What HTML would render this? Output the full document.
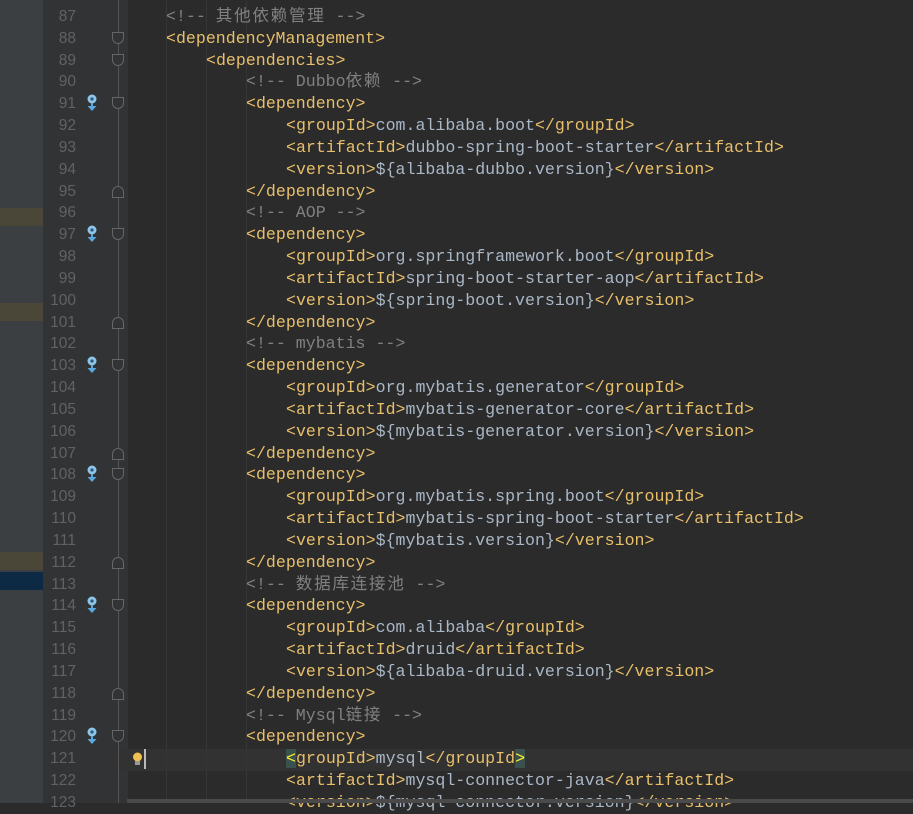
<!DOCTYPE html>
<html><head><meta charset="utf-8"><style>
body{margin:0;width:913px;height:803px;overflow:hidden;background:#2b2b2b;position:relative;font-family:"Liberation Mono","Noto Sans CJK SC",monospace;font-size:16.6px}
.lp{position:absolute;left:0;top:0;width:43px;height:803px;background:#3c3f41}
.gut{position:absolute;left:43px;top:0;width:85px;height:803px;background:#313335}
.fold{position:absolute;left:118px;top:0;width:1px;height:803px;background:#555}
.ln{position:absolute;left:43px;width:33px;text-align:right;color:#606366;font-family:"Liberation Sans",sans-serif;font-size:15.5px;line-height:21.83px}
.c{position:absolute;left:126px;white-space:pre;color:#a9b7c6;line-height:21.83px}
.t{color:#e8bf6a}.m{color:#808080}.z{letter-spacing:1.7px}
.g{position:absolute;top:0;height:803px;width:1px;background:#363636}
.fm{position:absolute;left:112px;width:12px;height:12px;border:1px solid #666;background:#313335;box-sizing:border-box}
.pin{position:absolute;left:86px;width:12px;height:18px}
</style></head><body>
<div class="lp"></div>
<div style="position:absolute;left:0;top:208px;width:43px;height:18px;background:#4a4638"></div>
<div style="position:absolute;left:0;top:303px;width:43px;height:18px;background:#4a4638"></div>
<div style="position:absolute;left:0;top:552px;width:43px;height:18px;background:#4a4638"></div>
<div style="position:absolute;left:0;top:572px;width:43px;height:18px;background:#0d2a45"></div>
<div class="gut"></div>
<div style="position:absolute;left:119px;top:749px;width:794px;height:22px;background:#323232"></div>
<div class="g" style="left:166px"></div><div class="g" style="left:206px"></div><div class="g" style="left:246px"></div>
<div class="fold"></div>
<div id="x"></div>
<div style="position:absolute;left:127px;top:799px;width:786px;height:4px;background:#4a4a4a"></div>
<script>
var L=[
[0,'<span class="m">&lt;!-- <span class="z">其他依赖管理</span> --&gt;</span>'],
[0,'<span class="t">&lt;dependencyManagement&gt;</span>','o'],
[1,'<span class="t">&lt;dependencies&gt;</span>','o'],
[2,'<span class="m">&lt;!-- Dubbo<span class="z">依赖</span> --&gt;</span>'],
[2,'<span class="t">&lt;dependency&gt;</span>','o','p'],
[3,'<span class="t">&lt;groupId&gt;</span>com.alibaba.boot<span class="t">&lt;/groupId&gt;</span>'],
[3,'<span class="t">&lt;artifactId&gt;</span>dubbo-spring-boot-starter<span class="t">&lt;/artifactId&gt;</span>'],
[3,'<span class="t">&lt;version&gt;</span>${alibaba-dubbo.version}<span class="t">&lt;/version&gt;</span>'],
[2,'<span class="t">&lt;/dependency&gt;</span>','c'],
[2,'<span class="m">&lt;!-- AOP --&gt;</span>'],
[2,'<span class="t">&lt;dependency&gt;</span>','o','p'],
[3,'<span class="t">&lt;groupId&gt;</span>org.springframework.boot<span class="t">&lt;/groupId&gt;</span>'],
[3,'<span class="t">&lt;artifactId&gt;</span>spring-boot-starter-aop<span class="t">&lt;/artifactId&gt;</span>'],
[3,'<span class="t">&lt;version&gt;</span>${spring-boot.version}<span class="t">&lt;/version&gt;</span>'],
[2,'<span class="t">&lt;/dependency&gt;</span>','c'],
[2,'<span class="m">&lt;!-- mybatis --&gt;</span>'],
[2,'<span class="t">&lt;dependency&gt;</span>','o','p'],
[3,'<span class="t">&lt;groupId&gt;</span>org.mybatis.generator<span class="t">&lt;/groupId&gt;</span>'],
[3,'<span class="t">&lt;artifactId&gt;</span>mybatis-generator-core<span class="t">&lt;/artifactId&gt;</span>'],
[3,'<span class="t">&lt;version&gt;</span>${mybatis-generator.version}<span class="t">&lt;/version&gt;</span>'],
[2,'<span class="t">&lt;/dependency&gt;</span>','c'],
[2,'<span class="t">&lt;dependency&gt;</span>','o','p'],
[3,'<span class="t">&lt;groupId&gt;</span>org.mybatis.spring.boot<span class="t">&lt;/groupId&gt;</span>'],
[3,'<span class="t">&lt;artifactId&gt;</span>mybatis-spring-boot-starter<span class="t">&lt;/artifactId&gt;</span>'],
[3,'<span class="t">&lt;version&gt;</span>${mybatis.version}<span class="t">&lt;/version&gt;</span>'],
[2,'<span class="t">&lt;/dependency&gt;</span>','c'],
[2,'<span class="m">&lt;!-- <span class="z">数据库连接池</span> --&gt;</span>'],
[2,'<span class="t">&lt;dependency&gt;</span>','o','p'],
[3,'<span class="t">&lt;groupId&gt;</span>com.alibaba<span class="t">&lt;/groupId&gt;</span>'],
[3,'<span class="t">&lt;artifactId&gt;</span>druid<span class="t">&lt;/artifactId&gt;</span>'],
[3,'<span class="t">&lt;version&gt;</span>${alibaba-druid.version}<span class="t">&lt;/version&gt;</span>'],
[2,'<span class="t">&lt;/dependency&gt;</span>','c'],
[2,'<span class="m">&lt;!-- Mysql<span class="z">链接</span> --&gt;</span>'],
[2,'<span class="t">&lt;dependency&gt;</span>','o','p'],
[3,'<span class="t"><span style="background:#3b514d;color:#ffef28">&lt;</span>groupId&gt;</span>mysql<span class="t">&lt;/groupId<span style="background:#3b514d;color:#ffef28">&gt;</span></span>'],
[3,'<span class="t">&lt;artifactId&gt;</span>mysql-connector-java<span class="t">&lt;/artifactId&gt;</span>'],
[3,'<span class="t">&lt;version&gt;</span>${mysql-connector.version}<span class="t">&lt;/version&gt;</span>']
];
var h='';
for(var i=0;i<L.length;i++){var yy=6+i*21.83;var r=L[i];
h+='<div class="ln" style="top:'+yy+'px">'+(87+i)+'</div>';
h+='<div class="c" style="top:'+yy+'px;left:'+(166+r[0]*40)+'px">'+r[1]+'</div>';
if(r[2]=='o')h+='<div class="fm" style="top:'+(yy+4)+'px;border-radius:0 0 6px 6px"></div>';
if(r[2]=='c')h+='<div class="fm" style="top:'+(yy+5)+'px;border-radius:6px 6px 0 0"></div>';
if(r[3])h+='<svg class="pin" style="top:'+(yy+1)+'px" viewBox="0 0 12 18"><circle cx="6" cy="5" r="4.5" fill="#8ec5e8"/><circle cx="6" cy="5" r="1.6" fill="#2b5a7a"/><rect x="5" y="9" width="2" height="5" fill="#5aa9e0"/><path d="M1.5 12 L6 17 L10.5 12Z" fill="#5aa9e0"/></svg>';
}
h+='<svg style="position:absolute;left:132px;top:752px" width="11" height="14" viewBox="0 0 11 14"><circle cx="5.5" cy="5" r="4.5" fill="#f0c050"/><rect x="3" y="9" width="5" height="4" fill="#999"/></svg><div style="position:absolute;left:144px;top:749px;width:2px;height:20px;background:#bbb"></div>';
document.getElementById('x').innerHTML=h;
</script>
</body></html>
